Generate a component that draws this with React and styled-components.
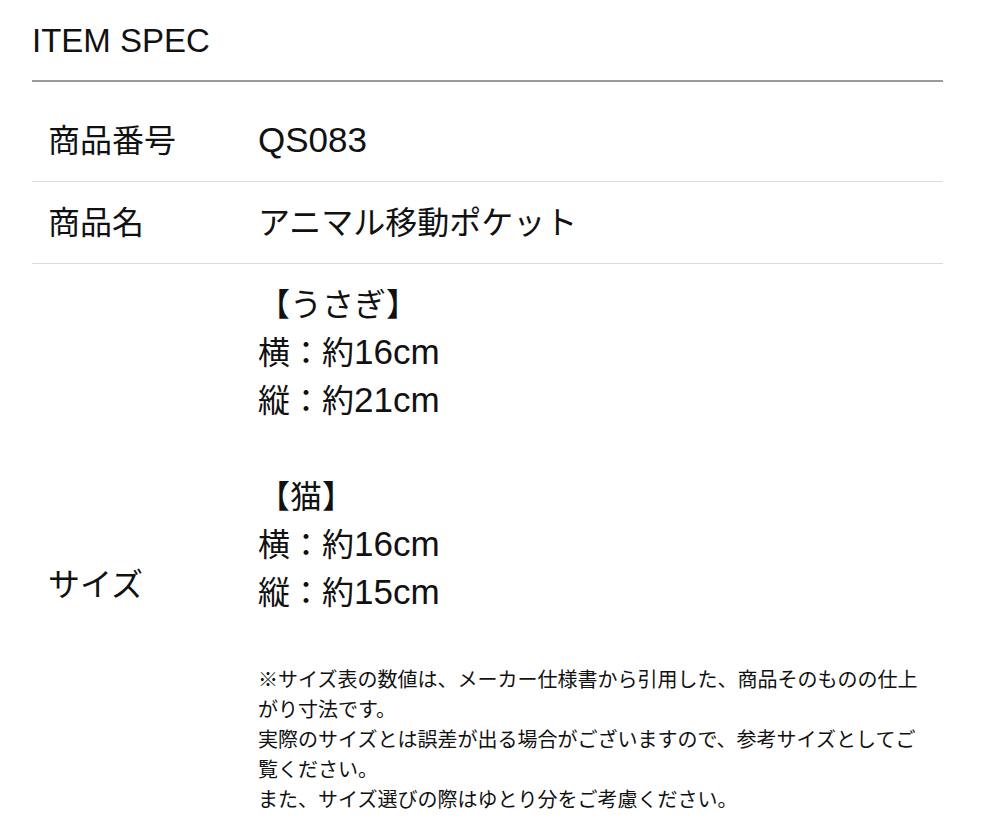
import React from "react";
import styled, { createGlobalStyle } from "styled-components";

const GlobalStyle = createGlobalStyle`
  body {
    margin: 0;
    background: #fff;
    color: #111;
    font-family: "Liberation Sans", "Noto Sans CJK JP", sans-serif;
  }
`;

const Wrapper = styled.section`
  width: 911px;
  margin-left: 32px;
  padding-top: 24px;
`;

const Title = styled.h2`
  margin: 0 0 23px;
  font-size: 33px;
  line-height: 1;
  font-weight: normal;
  color: #111;
`;

const Rule = styled.div`
  height: 2px;
  background: #9a9a9a;
  margin-bottom: 18px;
`;

const Row = styled.div`
  display: grid;
  grid-template-columns: 210px 1fr;
  align-items: center;
  border-bottom: ${(p) => (p.$last ? "none" : "1px solid #dcdcdc")};
`;

const Label = styled.div`
  padding: 16.5px 16px;
  font-size: 32px;
  line-height: 48px;
`;

const Value = styled.div`
  padding: 16.5px 16px ${(p) => p.$bottom || 16.5}px;
  font-size: 32px;
  line-height: 48px;
`;

const Line = styled.div`
  min-height: 48px;
`;

// latin runs render a touch larger, like the mac system font does next to kana
const Latin = styled.span`
  font-size: 35px;
  line-height: 1;
`;

const Note = styled.p`
  margin: 48px 0 0;
  font-size: 20px;
  line-height: 30px;
`;

function SpecRow({ label, children, last, bottom }) {
  return (
    <Row $last={last}>
      <Label>{label}</Label>
      <Value $bottom={bottom}>{children}</Value>
    </Row>
  );
}

export default function App() {
  return (
    <Wrapper>
      <GlobalStyle />
      <Title>ITEM SPEC</Title>
      <Rule />
      <SpecRow label="商品番号">
        <Latin>QS083</Latin>
      </SpecRow>
      <SpecRow label="商品名">アニマル移動ポケット</SpecRow>
      <SpecRow label="サイズ" last bottom={92}>
        <Line>【うさぎ】</Line>
        <Line>横：約<Latin>16cm</Latin></Line>
        <Line>縦：約<Latin>21cm</Latin></Line>
        <Line />
        <Line>【猫】</Line>
        <Line>横：約<Latin>16cm</Latin></Line>
        <Line>縦：約<Latin>15cm</Latin></Line>
        <Note>
          ※サイズ表の数値は、メーカー仕様書から引用した、商品そのものの仕上がり寸法です。
          <br />
          実際のサイズとは誤差が出る場合がございますので、参考サイズとしてご覧ください。
          <br />
          また、サイズ選びの際はゆとり分をご考慮ください。
        </Note>
      </SpecRow>
    </Wrapper>
  );
}
